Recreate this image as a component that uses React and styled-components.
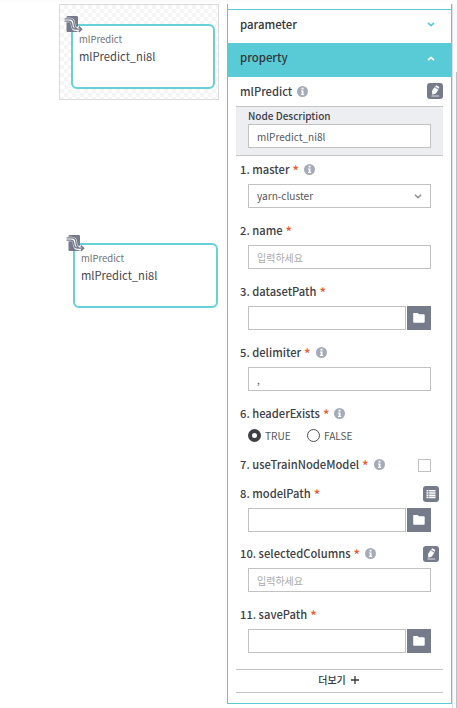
import React from "react";
import styled, { createGlobalStyle } from "styled-components";

const GlobalStyle = createGlobalStyle`
  * { box-sizing: border-box; }
  body {
    margin: 0;
    background: #fff;
    color: #3d4047;
    font-family: "Noto Sans CJK KR", "Noto Sans", sans-serif;
  }
  input, button { font-family: inherit; margin: 0; padding: 0; border-radius: 0; }
`;

const Page = styled.div`
  display: flex;
  width: 457px;
  height: 708px;
  overflow: hidden;
  border-top: 2px solid #fbfbfb;
  padding-top: 2px;
`;

const Canvas = styled.div`
  width: 168px;
  margin-left: 59px;
  flex: none;
`;

const DragPreview = styled.div`
  width: 160px;
  height: 96px;
  padding: 20px 0 0 11px;
  border: 1px solid #dadadd;
  background: repeating-conic-gradient(#f5f5f6 0 25%, #fff 0 50%) 0 0 / 8px 8px;
`;

const CanvasNode = styled.div`
  padding: 144px 0 0 14px;
`;

const NodeCard = styled.div`
  position: relative;
  width: ${(p) => p.$width}px;
  height: 65px;
  margin-top: -1px;
  padding: 7px 0 0 6px;
  background: #fff;
  border: 2px solid #67d1d8;
  border-radius: 6px;
  white-space: nowrap;
`;

const NodeType = styled.div`
  font-size: 9.5px;
  line-height: 12px;
  color: #727277;
`;

const NodeName = styled.div`
  margin-top: 3px;
  font-size: 11.2px;
  line-height: 16px;
  color: #48484d;
`;

const NodeGlyph = styled.svg`
  position: absolute;
  left: -10px;
  top: -11px;
  width: 20px;
  height: 20px;
`;

const Panel = styled.div`
  width: 225px;
  height: 700px;
  flex: none;
  border: 1px solid #5dc9d5;
  border-top: 0;
`;

const PanelTop = styled.div`
  height: 6px;
  border-bottom: 1px solid #5dc9d5;
`;

const SectionHeader = styled.div`
  display: flex;
  align-items: center;
  justify-content: space-between;
  height: ${(p) => (p.$open ? 34 : 33)}px;
  padding: 0 16px 6px 12px;
  background: ${(p) => (p.$open ? "#58cbd6" : "#fff")};
  color: #34363b;
  font-size: 11.4px;
  font-weight: 500;
  svg { margin-top: 2px; color: ${(p) => (p.$open ? "#fff" : "#58cbd6")}; }
`;

const Row = styled.div`
  display: flex;
  align-items: center;
  height: ${(p) => p.$height || 27}px;
  padding: 0 ${(p) => p.$right || 12}px ${(p) => p.$bottom ?? 3}px 12px;
  white-space: nowrap;
`;

const Label = styled.span`
  margin-top: -1px;
  font-size: 11.2px;
  line-height: 18px;
  font-weight: 500;
`;

const Required = styled.span`
  margin: 2px 0 0 3px;
  color: #ed5a2d;
  font-size: 13.5px;
  line-height: 18px;
  font-weight: 500;
`;

const InfoIcon = styled.svg`
  width: 11px;
  height: 11px;
  margin-left: 5px;
  margin-top: 1px;
  flex: none;
`;

const ToolButton = styled.button`
  display: flex;
  align-items: center;
  justify-content: center;
  width: 16px;
  height: 16px;
  margin-left: auto;
  margin-top: ${(p) => p.$drop || 0}px;
  border: 0;
  border-radius: 3px;
  background: #767b8c;
  flex: none;
`;

const Description = styled.div`
  height: 50px;
  margin: 0 8px 1px;
  padding: 1px 12px 0;
  background: #edeef2;
  border-top: 1px solid #c4c4c7;
  border-bottom: 1px solid #c4c4c7;
`;

const DescriptionTitle = styled.div`
  height: 16px;
  font-size: 10px;
  line-height: 15px;
  font-weight: 500;
`;

const Block = styled.section`
  height: ${(p) => p.$height || 61}px;
`;

const Field = styled.div`
  display: flex;
  gap: 1px;
  padding: 0 20px;
`;

const TextInput = styled.input`
  display: block;
  width: 100%;
  min-width: 0;
  flex: 1;
  height: 24px;
  padding: 0 8px;
  border: 1px solid #c2c2c2;
  background: #fff;
  color: #55575d;
  font-size: 10px;
  outline: none;
  &::placeholder { color: #aaa; opacity: 1; }
`;

const Select = styled.div`
  display: flex;
  align-items: center;
  justify-content: space-between;
  width: 100%;
  height: 24px;
  padding: 0 8px;
  border: 1px solid #c2c2c2;
  color: #55575d;
  font-size: 10.1px;
  line-height: 16px;
  svg { color: #999; }
`;

const FolderButton = styled.button`
  display: flex;
  align-items: center;
  justify-content: center;
  width: 24px;
  height: 24px;
  border: 0;
  background: #767b8c;
`;

const RadioRow = styled.div`
  display: flex;
  align-items: center;
  height: 15px;
  padding-left: 20px;
`;

const RadioOption = styled.label`
  display: flex;
  align-items: center;
  width: 59px;
  gap: 4px;
  font-size: 10.1px;
  line-height: 16px;
  color: #55575d;
`;

const RadioMark = styled.span`
  width: 13px;
  height: 13px;
  border: ${(p) => (p.$on ? "4px solid #3f4045" : "1px solid #4c4d52")};
  border-radius: 50%;
  background: #fff;
  flex: none;
`;

const Checkbox = styled.span`
  width: 13px;
  height: 13px;
  margin-left: auto;
  margin-top: 2px;
  border: 1px solid #c2c2c2;
`;

const More = styled.button`
  display: flex;
  align-items: center;
  justify-content: center;
  gap: 5px;
  width: 207px;
  height: 24px;
  margin: 6px 8px 0;
  padding: 0 2px 2px 0;
  border: 0;
  border-top: 1px solid #c4c4c7;
  border-bottom: 1px solid #c4c4c7;
  background: #fff;
  color: #34363b;
  font-size: 10px;
  line-height: 16px;
  font-weight: 500;
`;

const ScrollRail = styled.div`
  flex: 1;
  background: #fafafb;
  border-left: 1px solid #dedfe2;
  padding-top: 68px;
`;

const ScrollThumb = styled.div`
  width: 1px;
  height: 640px;
  margin-left: 3px;
  background: #bfc0c5;
`;

function Chevron({ up }) {
  return (
    <svg width="8" height="5" viewBox="0 0 8 5" fill="none">
      <path d={up ? "M1 4.2L4 1.4 7 4.2" : "M1 .8L4 3.6 7 .8"} stroke="currentColor" strokeWidth="1.7" />
    </svg>
  );
}

function Info() {
  return (
    <InfoIcon viewBox="0 0 11 11">
      <circle cx="5.5" cy="5.5" r="5.5" fill="#a6abba" />
      <path d="M4.6 1.8h1.9v1.7H4.6zM4 4.5h2.5v3.6h.7v1H4v-1h.7V5.5H4z" fill="#fff" />
    </InfoIcon>
  );
}

function Edit({ drop }) {
  return (
    <ToolButton $drop={drop} aria-label="edit">
      <svg width="12" height="12" viewBox="0 0 12 12">
        <path d="M6.1 1.5l1.2-1.2 3 1.8-.6 1.7z" fill="#fff" />
        <path d="M5.6 2l3.9 2.4-2.6 4.2-3.6 1.2-.3-3.7z" fill="#fff" />
        <path d="M5.3 2.2l4 2.4" stroke="#9297a4" strokeWidth=".5" />
        <path d="M2.5 11h7.7" stroke="#dfe0e5" strokeWidth="1" />
      </svg>
    </ToolButton>
  );
}

function ListTool() {
  return (
    <ToolButton $drop={1} aria-label="list">
      <svg width="10" height="10" viewBox="0 0 10 10" fill="#fff">
        <path d="M.5 1h2v1.6h-2zM3.1 1h6.4v1.6H3.1zM.5 3.2h2v1.6h-2zM3.1 3.2h6.4v1.6H3.1zM.5 5.4h2V7h-2zM3.1 5.4h6.4V7H3.1zM.5 7.6h2v1.6h-2zM3.1 7.6h6.4v1.6H3.1z" />
      </svg>
    </ToolButton>
  );
}

function PathField() {
  return (
    <Field>
      <TextInput />
      <FolderButton aria-label="browse">
        <svg width="12" height="10" viewBox="0 0 12 10">
          <path d="M.6 0h4.2l1.1 1.2h4.8q1 0 1 1v6.6q0 1-1 1H1q-.8 0-.8-.8V.5Q.2 0 .6 0z" fill="#fff" />
        </svg>
      </FolderButton>
    </Field>
  );
}

function FieldLabel({ text, info, right, children }) {
  return (
    <Row $right={right}>
      <Label>{text}</Label>
      <Required>*</Required>
      {info && <Info />}
      {children}
    </Row>
  );
}

function Node({ width }) {
  return (
    <NodeCard $width={width}>
      <NodeGlyph viewBox="0 0 20 20" fill="none">
        <rect x="3.5" y="1" width="11.5" height="16" rx="1.3" fill="#767b8c" />
        <path d="M1.5 5h5.2c2.6 0 3.2 1.3 3.3 4.2.1 3.5 1 4.8 4 4.8H18" stroke="#fff" strokeWidth="4.6" />
        <path d="M1.5 3.9h5.4c3.2 0 4.1 1.7 4.2 5 .1 2.9.7 4 2.9 4.5M1.5 6.2h4.3c2.3 0 2.9 1 3 3.7.2 3.1 1.3 4.3 4.2 4.3h5.4" stroke="#767b8c" strokeWidth="1.3" />
        <path d="M15.8 11.6l2.7 2.6-2.7 2.6" stroke="#767b8c" strokeWidth="1.6" />
      </NodeGlyph>
      <NodeType>mlPredict</NodeType>
      <NodeName>mlPredict_ni8l</NodeName>
    </NodeCard>
  );
}

export default function App() {
  return (
    <>
      <GlobalStyle />
      <Page>
        <Canvas>
          <DragPreview><Node width={144} /></DragPreview>
          <CanvasNode><Node width={145} /></CanvasNode>
        </Canvas>
        <Panel>
          <PanelTop />
          <SectionHeader>parameter<Chevron /></SectionHeader>
          <SectionHeader $open>property<Chevron up /></SectionHeader>
          <Row $height={29} $right={8} $bottom={1}>
            <Label>mlPredict</Label>
            <Info />
            <Edit />
          </Row>
          <Description>
            <DescriptionTitle>Node Description</DescriptionTitle>
            <TextInput defaultValue="mlPredict_ni8l" />
          </Description>
          <Block>
            <FieldLabel text="1. master" info />
            <Field><Select>yarn-cluster<Chevron /></Select></Field>
          </Block>
          <Block>
            <FieldLabel text="2. name" />
            <Field><TextInput placeholder="입력하세요" /></Field>
          </Block>
          <Block>
            <FieldLabel text="3. datasetPath" />
            <PathField />
          </Block>
          <Block>
            <FieldLabel text="5. delimiter" info />
            <Field><TextInput defaultValue="," /></Field>
          </Block>
          <Block $height={51}>
            <FieldLabel text="6. headerExists" info />
            <RadioRow>
              <RadioOption><RadioMark $on />TRUE</RadioOption>
              <RadioOption><RadioMark />FALSE</RadioOption>
            </RadioRow>
          </Block>
          <Block $height={29}>
            <FieldLabel text="7. useTrainNodeModel" info right={20}><Checkbox /></FieldLabel>
          </Block>
          <Block $height={60}>
            <FieldLabel text="8. modelPath"><ListTool /></FieldLabel>
            <PathField />
          </Block>
          <Block>
            <FieldLabel text="10. selectedColumns" info><Edit drop={2} /></FieldLabel>
            <Field><TextInput placeholder="입력하세요" /></Field>
          </Block>
          <Block>
            <FieldLabel text="11. savePath" />
            <PathField />
          </Block>
          <More>
            더보기
            <svg width="8" height="8" viewBox="0 0 8 8"><path d="M4 0v8M0 4h8" stroke="#34363b" strokeWidth="1.3" /></svg>
          </More>
        </Panel>
        <ScrollRail><ScrollThumb /></ScrollRail>
      </Page>
    </>
  );
}
